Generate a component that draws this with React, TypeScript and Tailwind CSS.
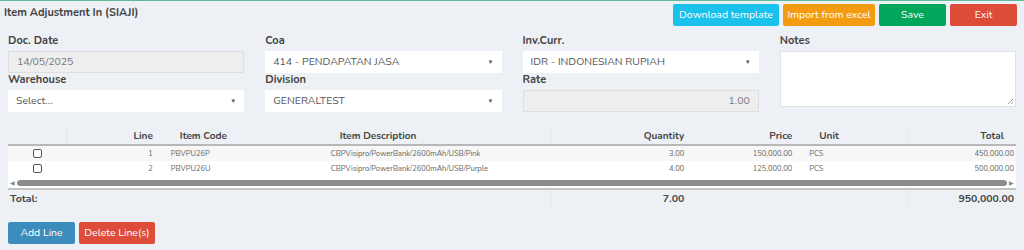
import React from "react";

interface Row {
  line: number;
  code: string;
  desc: string;
  qty: string;
  price: string;
  unit: string;
  total: string;
}

const rows: Row[] = [
  { line: 1, code: "PBVPU26P", desc: "CBPVisipro/PowerBank/2600mAh/USB/Pink", qty: "3.00", price: "150,000.00", unit: "PCS", total: "450,000.00" },
  { line: 2, code: "PBVPU26U", desc: "CBPVisipro/PowerBank/2600mAh/USB/Purple", qty: "4.00", price: "125,000.00", unit: "PCS", total: "500,000.00" },
];

function Caret() {
  return <span className="text-[6px] text-[#555] leading-none">▼</span>;
}

function Label({ children }: { children: React.ReactNode }) {
  return <div className="text-[11px] font-bold text-[#444] leading-[14px] mb-[3px]">{children}</div>;
}

function SelectBox({ value }: { value: string }) {
  return (
    <div className="h-[22px] bg-white flex items-center justify-between pl-[8px] pr-[8px] text-[10.5px] text-[#555]">
      <span>{value}</span>
      <Caret />
    </div>
  );
}

function DisabledBox({ value, right }: { value: string; right?: boolean }) {
  return (
    <div
      className={
        "h-[22px] bg-[#eeeeee] border border-[#dedede] flex items-center px-[8px] text-[10.5px] text-[#777] " +
        (right ? "justify-end" : "justify-start")
      }
    >
      {value}
    </div>
  );
}

export default function App() {
  return (
    <div
      className="w-[1024px] h-[250px] bg-[#edf0f5] border-t border-[#5dbb96] px-[8px] overflow-hidden"
      style={{ fontFamily: "Nunito, Lato, 'Open Sans', sans-serif" }}
    >
      {/* header */}
      <div className="flex items-start justify-between h-[29px]">
        <div className="text-[11px] font-bold text-[#444] pt-[4px] -ml-[4px]">Item Adjustment In (SIAJI)</div>
        <div className="flex gap-[4px] pt-[3px] -mr-[1px]">
          <button className="h-[22px] w-[106px] rounded-[2px] bg-[#19c1ec] text-white text-[10.5px]">Download template</button>
          <button className="h-[22px] w-[92px] rounded-[2px] bg-[#f39c12] text-white text-[10.5px]">Import from excel</button>
          <button className="h-[22px] w-[67px] rounded-[2px] bg-[#00a65a] text-white text-[10.5px]">Save</button>
          <button className="h-[22px] w-[67px] rounded-[2px] bg-[#dd4b39] text-white text-[10.5px]">Exit</button>
        </div>
      </div>

      {/* form */}
      <div className="grid grid-cols-4 gap-x-[21px] mt-[4px]">
        <div className="flex flex-col">
          <Label>Doc. Date</Label>
          <DisabledBox value="14/05/2025" />
          <Label>Warehouse</Label>
          <SelectBox value="Select..." />
        </div>
        <div className="flex flex-col">
          <Label>Coa</Label>
          <SelectBox value="414 - PENDAPATAN JASA" />
          <Label>Division</Label>
          <SelectBox value="GENERALTEST" />
        </div>
        <div className="flex flex-col">
          <Label>Inv.Curr.</Label>
          <SelectBox value="IDR - INDONESIAN RUPIAH" />
          <Label>Rate</Label>
          <DisabledBox value="1.00" right />
        </div>
        <div className="flex flex-col">
          <Label>Notes</Label>
          <div className="relative h-[56px] bg-white border border-[#e2e2e2]">
            <svg className="absolute right-[1px] bottom-[1px]" width="7" height="7" viewBox="0 0 7 7">
              <path d="M6 1 L1 6 M6 4 L4 6" stroke="#888" strokeWidth="0.8" />
            </svg>
          </div>
        </div>
      </div>

      {/* table */}
      <div className="mt-[16px] text-[#666]">
        <div className="flex h-[18px] items-center text-[10px] font-bold text-[#444] border-b-2 border-[#b8b8b8]">
          <div className="w-[59px] h-full border-r border-[#e3e6ea]" />
          <div className="w-[93px] text-right pr-[7px]">Line</div>
          <div className="w-[165px] pl-[20px]">Item Code</div>
          <div className="w-[227px] h-full flex items-center pl-[15px] border-r border-[#e3e6ea]">Item Description</div>
          <div className="w-[138px] text-right pr-[5px]">Quantity</div>
          <div className="w-[110px] text-right pr-[7px]">Price</div>
          <div className="w-[110px] h-full flex items-center pl-[20px] border-r border-[#e3e6ea]">Unit</div>
          <div className="w-[107px] text-right pr-[12px]">Total</div>
        </div>
        {rows.map((r, i) => (
          <div key={r.line} className={"flex h-[15px] items-center text-[7.5px] " + (i === 0 ? "bg-[#f7f7f7]" : "bg-white")}>
            <div className="w-[59px] flex justify-center">
              <span className="w-[9px] h-[9px] border border-[#555] rounded-[2px] bg-white" />
            </div>
            <div className="w-[93px] text-right pr-[7px]">{r.line}</div>
            <div className="w-[165px] pl-[11px]">{r.code}</div>
            <div className="w-[227px] pl-[6px]">{r.desc}</div>
            <div className="w-[138px] text-right pr-[5px]">{r.qty}</div>
            <div className="w-[110px] text-right pr-[7px]">{r.price}</div>
            <div className="w-[110px] pl-[10px]">{r.unit}</div>
            <div className="w-[107px] text-right pr-[2px]">{r.total}</div>
          </div>
        ))}
        <div className="flex items-end h-[14px] pb-[2px] bg-white border-b-2 border-[#c4c4c4] px-[2px] gap-[2px]">
          <span className="text-[6px] text-[#888] leading-[6px]">◀</span>
          <div className="flex-1 h-[6px] rounded-full bg-[#8c8c8c]" />
          <span className="text-[6px] text-[#888] leading-[6px]">▶</span>
        </div>
        <div className="flex h-[18px] items-center text-[10.5px] font-bold text-[#444]">
          <div className="w-[544px] h-full flex items-center pl-[2px] border-r border-[#e3e6ea]">Total:</div>
          <div className="w-[138px] text-right pr-[5px]">7.00</div>
          <div className="w-[220px] h-full border-r border-[#e3e6ea]" />
          <div className="w-[107px] text-right pr-[2px]">950,000.00</div>
        </div>
      </div>

      <div className="flex gap-[4px] mt-[14px]">
        <button className="h-[22px] w-[67px] rounded-[2px] bg-[#3c8dbc] text-white text-[10.5px]">Add Line</button>
        <button className="h-[22px] w-[76px] rounded-[2px] bg-[#dd4b39] text-white text-[10.5px]">Delete Line(s)</button>
      </div>
    </div>
  );
}
